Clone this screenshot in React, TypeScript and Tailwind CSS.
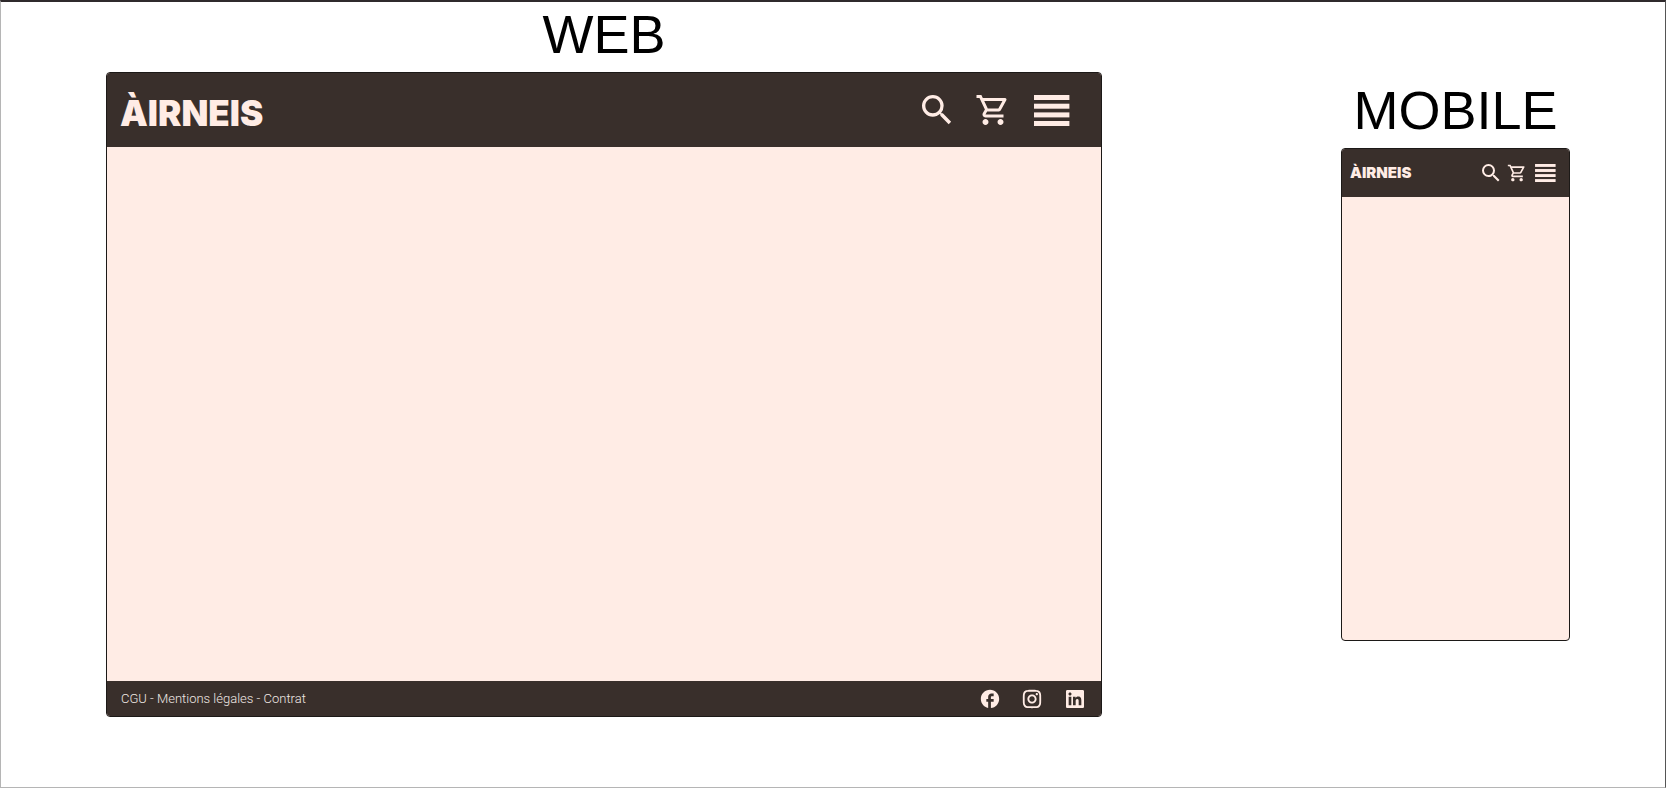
import type { ReactNode } from "react";
import { MdFacebook, MdOutlineShoppingCart, MdSearch } from "react-icons/md";
import { RiInstagramLine, RiLinkedinBoxFill } from "react-icons/ri";

function MenuIcon({ className }: { className: string }) {
  return (
    <svg viewBox="0 0 46 31" fill="currentColor" className={className} aria-hidden="true">
      <rect x="5" y="0" width="35.4" height="5" />
      <rect x="5" y="8.7" width="35.4" height="5" />
      <rect x="5" y="17.4" width="35.4" height="5" />
      <rect x="5" y="26" width="35.4" height="5" />
    </svg>
  );
}

function Frame({ title, children }: { title: string; children: ReactNode }) {
  return (
    <>
      <h2 className="text-center font-['Liberation_Sans',Arial,sans-serif] text-[54px] leading-[60px] text-black">
        {title}
      </h2>
      <div className="mt-2 overflow-hidden rounded border border-[#1c1917] bg-[#ffece5]">
        {children}
      </div>
    </>
  );
}

export default function App() {
  return (
    <div className="flex min-h-screen items-start gap-[239px] border border-t-2 border-t-[#2f2a2c] border-r-[#555555] border-b-[#b5b5b5] border-l-[#b5b5b5] bg-white pr-[95px] pl-[105px] font-['Inter','Liberation_Sans',sans-serif]">
      <section className="flex-1 pt-[2px]">
        <Frame title="WEB">
          <header className="flex h-[74px] items-center justify-between bg-[#392f2b] pr-[26px] pl-[13px] text-[#ffece5]">
            <a href="#" className="pt-1.5 text-[35px] leading-10 font-black">
              ÀIRNEIS
            </a>
            <nav className="flex items-center gap-[18px]">
              <button aria-label="Rechercher">
                <MdSearch className="size-10" />
              </button>
              <button aria-label="Panier">
                <MdOutlineShoppingCart className="size-9" />
              </button>
              <button aria-label="Menu">
                <MenuIcon className="h-[31px] w-[46px]" />
              </button>
            </nav>
          </header>
          <main className="h-[534px]" />
          <footer className="flex h-[35px] items-center justify-between bg-[#392f2b] pr-[14px] pl-[14px] text-[#ffece5]">
            <p className="font-['Roboto',sans-serif] text-[13px] leading-4 font-light text-[#f0e8e4]">
              <a href="#">CGU</a> - <a href="#">Mentions légales</a> - <a href="#">Contrat</a>
            </p>
            <div className="flex items-center gap-5">
              <a href="#" aria-label="Facebook">
                <MdFacebook className="size-[22px]" />
              </a>
              <a href="#" aria-label="Instagram">
                <RiInstagramLine className="size-[22px]" />
              </a>
              <a href="#" aria-label="LinkedIn">
                <RiLinkedinBoxFill className="size-6" />
              </a>
            </div>
          </footer>
        </Frame>
      </section>
      <section className="w-[229px] shrink-0 pt-[78px]">
        <Frame title="MOBILE">
          <header className="flex h-12 items-center justify-between bg-[#392f2b] pr-[9px] pl-2 text-[#ffece5]">
            <a href="#" className="text-[15px] leading-5 font-black">
              ÀIRNEIS
            </a>
            <nav className="flex items-center gap-1">
              <button aria-label="Rechercher">
                <MdSearch className="size-6" />
              </button>
              <button aria-label="Panier">
                <MdOutlineShoppingCart className="size-5" />
              </button>
              <button aria-label="Menu">
                <MenuIcon className="h-[18px] w-[29px]" />
              </button>
            </nav>
          </header>
          <main className="h-[443px]" />
        </Frame>
      </section>
    </div>
  );
}
